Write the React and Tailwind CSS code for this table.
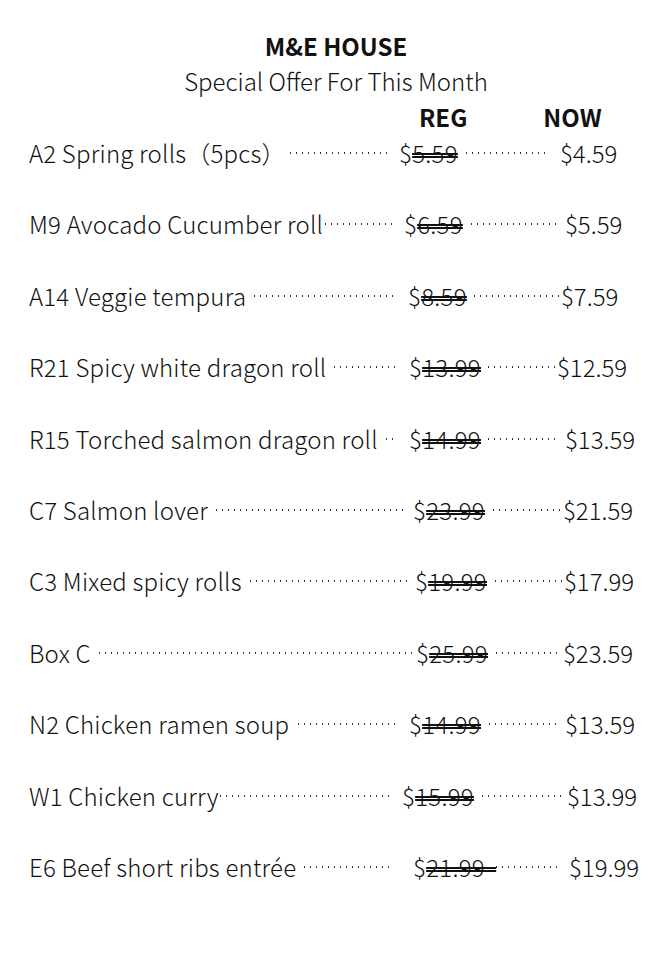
import React from 'react';

const rows = [
  { name: 'A2 Spring rolls（5pcs）', reg: '5.59', now: '$4.59', nameCol: 'w-[370px]', regCol: 'w-[161px]', g1: 'ml-[4px]', g2: 'mr-[9px]', g3: 'ml-[8px]', g4: 'mr-[10px]' },
  { name: 'M9 Avocado Cucumber roll', reg: '6.59', now: '$5.59', nameCol: 'w-[375px]', regCol: 'w-[161px]', g1: 'ml-[2px]', g2: 'mr-[9px]', g3: 'ml-[8px]', g4: 'mr-[9px]' },
  { name: 'A14 Veggie tempura', reg: '8.59', now: '$7.59', nameCol: 'w-[379px]', regCol: 'w-[153px]', g1: 'ml-[8px]', g2: 'mr-[10px]', g3: 'ml-[7px]', g4: 'mr-[1px]' },
  { name: 'R21 Spicy white dragon roll', reg: '13.99', now: '$12.59', nameCol: 'w-[380px]', regCol: 'w-[148px]', g1: 'ml-[8px]', g2: 'mr-[9px]', g3: 'ml-[7px]', g4: 'mr-[2px]' },
  { name: 'R15 Torched salmon dragon roll', reg: '14.99', now: '$13.59', nameCol: 'w-[380px]', regCol: 'w-[156px]', g1: 'ml-[8px]', g2: 'mr-[11px]', g3: 'ml-[7px]', g4: 'mr-[8px]' },
  { name: 'C7 Salmon lover', reg: '23.99', now: '$21.59', nameCol: 'w-[384px]', regCol: 'w-[150px]', g1: 'ml-[8px]', g2: 'mr-[8px]', g3: 'ml-[8px]', g4: 'mr-[1px]' },
  { name: 'C3 Mixed spicy rolls', reg: '19.99', now: '$17.99', nameCol: 'w-[386px]', regCol: 'w-[149px]', g1: 'ml-[8px]', g2: 'mr-[8px]', g3: 'ml-[8px]', g4: 'mr-[1px]' },
  { name: 'Box C', reg: '25.99', now: '$23.59', nameCol: 'w-[387px]', regCol: 'w-[147px]', g1: 'ml-[8px]', g2: 'mr-[1px]', g3: 'ml-[8px]', g4: 'mr-[1px]' },
  { name: 'N2 Chicken ramen soup', reg: '14.99', now: '$13.59', nameCol: 'w-[380px]', regCol: 'w-[156px]', g1: 'ml-[9px]', g2: 'mr-[9px]', g3: 'ml-[8px]', g4: 'mr-[7px]' },
  { name: 'W1 Chicken curry', reg: '15.99', now: '$13.99', nameCol: 'w-[373px]', regCol: 'w-[165px]', g1: 'ml-[1px]', g2: 'mr-[9px]', g3: 'ml-[8px]', g4: 'mr-[2px]' },
  { name: 'E6 Beef short ribs entrée', reg: '21.99\u00a0\u00a0', now: '$19.99', nameCol: 'w-[384px]', regCol: 'w-[156px]', g1: 'ml-[8px]', g2: 'mr-[21px]', g3: 'ml-0', g4: 'mr-[11px]' },
];

// dotted leader: ~1.5px dots every 6px
const dots =
  'h-[2px] bg-[linear-gradient(to_right,#333_1.5px,transparent_1.5px)] bg-[length:6px_2px] bg-repeat-x';

const App = () => {
  return (
    <div className="min-h-screen bg-white pt-[28px] text-[#111] font-['Noto_Sans_CJK_SC','Noto_Sans',sans-serif]">
      <h1 className="h-[35px] text-center text-[24px] font-bold leading-[35px]">M&amp;E HOUSE</h1>
      <p className="h-9 text-center text-[24px] font-light leading-9">Special Offer For This Month</p>
      <div className="flex h-9 items-center pl-[29px] text-[24px] font-bold">
        <span className="ml-[390px]">REG</span>
        <span className="ml-[76px]">NOW</span>
      </div>
      <div className="flex flex-col gap-[35.4px] pl-[29px]">
        {rows.map((r) => (
          <div key={r.name} className="flex h-9 items-center text-[24px] font-light">
            <div className={`flex shrink-0 items-center ${r.nameCol}`}>
              <span className="whitespace-nowrap tracking-[0.2px]">{r.name}</span>
              <span className={`flex-1 ${dots} ${r.g1} ${r.g2}`} />
            </div>
            <div className={`flex shrink-0 items-center ${r.regCol}`}>
              <span className="whitespace-pre tracking-[0.3px]">
                $<span className="line-through decoration-double decoration-[1.5px]">{r.reg}</span>
              </span>
              <span className={`flex-1 ${dots} ${r.g3} ${r.g4}`} />
            </div>
            <span className="whitespace-nowrap">{r.now}</span>
          </div>
        ))}
      </div>
    </div>
  );
};

export default App;
